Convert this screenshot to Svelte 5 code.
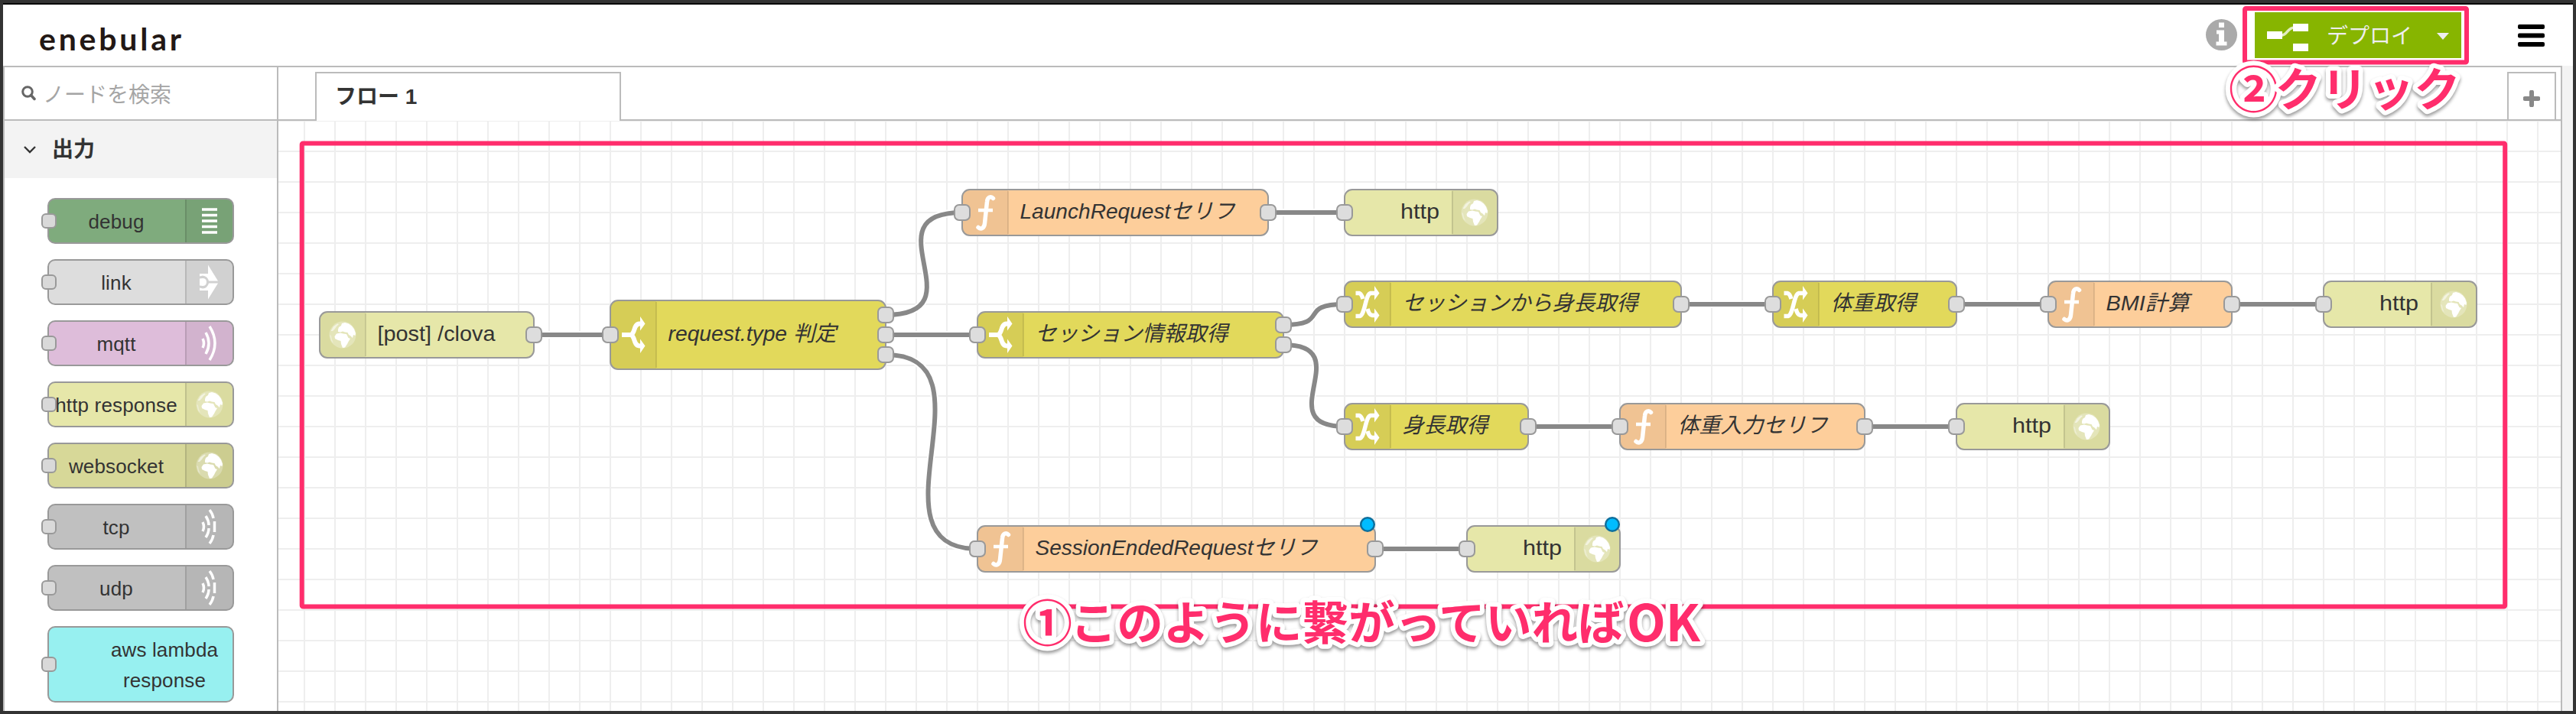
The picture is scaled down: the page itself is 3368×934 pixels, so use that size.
<script>
  const palette = [
    { label: 'debug', color: '#7fab7d', icon: 'debug' },
    { label: 'link', color: '#dddddd', icon: 'link' },
    { label: 'mqtt', color: '#debdda', icon: 'waves' },
    { label: 'http response', color: '#e6e7a9', icon: 'globe' },
    { label: 'websocket', color: '#d7d898', icon: 'globe' },
    { label: 'tcp', color: '#c0c0c0', icon: 'dashes' },
    { label: 'udp', color: '#c0c0c0', icon: 'dashes' },
    { label: 'aws lambda response', color: '#97f0f0', icon: null }
  ];

  const HTTP = '#e6e7a9';
  const RULE = '#e2d95b';
  const FUNC = '#fdce9b';

  // x, cy: left edge and vertical centre; ins/outs: port offsets from the centre
  const nodes = [
    { x: 418, w: 280, cy: 438, c: HTTP, icon: 'globe', t: '[post] /clova', tl: 154, ins: [], outs: [0] },
    { x: 798, w: 360, h: 90, cy: 438, c: RULE, icon: 'split', t: 'request.type 判定', tl: 220, it: true, ins: [0], outs: [-26, 0, 26] },
    { x: 1258, w: 400, cy: 278, c: FUNC, icon: 'func', t: 'LaunchRequestセリフ', tl: 281, it: true, ins: [0], outs: [0] },
    { x: 1758, w: 200, cy: 278, c: HTTP, icon: 'globe', right: true, t: 'http', tl: 51, ins: [0], outs: [] },
    { x: 1278, w: 400, cy: 438, c: RULE, icon: 'split', t: 'セッション情報取得', tl: 252, it: true, ins: [0], outs: [-13, 13] },
    { x: 1758, w: 440, cy: 398, c: RULE, icon: 'shuffle', t: 'セッションから身長取得', tl: 308, it: true, ins: [0], outs: [0] },
    { x: 2318, w: 240, cy: 398, c: RULE, icon: 'shuffle', t: '体重取得', tl: 112, it: true, ins: [0], outs: [0] },
    { x: 2678, w: 240, cy: 398, c: FUNC, icon: 'func', t: 'BMI計算', tl: 109, it: true, ins: [0], outs: [0] },
    { x: 3038, w: 200, cy: 398, c: HTTP, icon: 'globe', right: true, t: 'http', tl: 51, ins: [0], outs: [] },
    { x: 1758, w: 240, cy: 558, c: RULE, icon: 'shuffle', t: '身長取得', tl: 112, it: true, ins: [0], outs: [0] },
    { x: 2118, w: 320, cy: 558, c: FUNC, icon: 'func', t: '体重入力セリフ', tl: 196, it: true, ins: [0], outs: [0] },
    { x: 2558, w: 200, cy: 558, c: HTTP, icon: 'globe', right: true, t: 'http', tl: 51, ins: [0], outs: [] },
    { x: 1278, w: 520, cy: 718, c: FUNC, icon: 'func', t: 'SessionEndedRequestセリフ', tl: 369, it: true, ins: [0], outs: [0], changed: true },
    { x: 1918, w: 200, cy: 718, c: HTTP, icon: 'globe', right: true, t: 'http', tl: 51, ins: [0], outs: [], changed: true }
  ];

  const wires = [
    [698, 438, 798, 438],
    [1158, 412, 1258, 278],
    [1158, 438, 1278, 438],
    [1158, 464, 1278, 718],
    [1658, 278, 1758, 278],
    [1678, 425, 1758, 398],
    [1678, 451, 1758, 558],
    [2198, 398, 2318, 398],
    [2558, 398, 2678, 398],
    [2918, 398, 3038, 398],
    [1998, 558, 2118, 558],
    [2438, 558, 2558, 558],
    [1798, 718, 1918, 718]
  ];

  function curve([x1, y1, x2, y2]) {
    const o = 0.75 * Math.min(200, Math.hypot(x2 - x1, y2 - y1));
    return `M${x1} ${y1}C${x1 + o} ${y1} ${x2 - o} ${y2} ${x2} ${y2}`;
  }
</script>

{#snippet icon(name)}
  {#if name === 'globe'}
    <g fill="#fff">
      <circle r="17.5" opacity="0.28" />
      <path d="M-6-7L-5-10-2-12-1-15 3-16 8-14.500 12-11.500 15-7.500 17-2 16.500 1 14 0 13 4 10.500 1.500 8 0 6.500-3 3-3.500 0-4.500-3-3.500-6-4z" />
      <path d="M-8-1.500L-3-2.500 1-1.500 5-1 7.500 4 10 5 7.500 9 6 12 3 16.500 0 17-2 12-2.500 8-6 7-10 5-10.500 2z" />
      <path d="M-15.500-5L-12-11-7-14.500-5-14-8-11-10-8-13-5z" opacity="0.55" />
      <path d="M-17 0L-15 1-14 6-12 11-15 8z" opacity="0.35" />
    </g>
  {:else if name === 'split'}
    <path d="M-15 0H-3C3-3 0-14 8-14.5H11M-3 0C3 3 0 14 8 14.5H11" fill="none" stroke="#fff" stroke-width="6" />
    <path d="M9-24L15.500-14.500 9-5.500zM9 24L15.500 14.500 9 5.500z" fill="#fff" />
  {:else if name === 'shuffle'}
    <path d="M-15.500 15.500H-10C-3 13-3-13 4-14.500H10" fill="none" stroke="#fff" stroke-width="5.500" />
    <path d="M-15.500-14.500H-11Q-8-14-6-7M0 6Q2 14 6 14.500H10" fill="none" stroke="#fff" stroke-width="5.500" />
    <path d="M9-24L15.500-14.500 9-5.500zM9 24L15.500 14.500 9 5.500z" fill="#fff" />
  {:else if name === 'func'}
    <path d="M10.500-18.500C8-21.500 3-21 2.500-14L-.5 14C-1 20-5 23-9 19.500" fill="none" stroke="#fff" stroke-width="5.500" stroke-linecap="round" />
    <path d="M-9-3H10" stroke="#fff" stroke-width="4.500" />
  {:else if name === 'debug'}
    <path d="M-10-15H10M-10-7.500H10M-10 0H10M-10 7.500H10M-10 15H10" stroke="#fff" stroke-width="3.400" />
  {:else if name === 'link'}
    <path d="M-13-11H-2V-22.500L11-1.500H-1Q-3-8-9-8.500L-13-7.500zM-13 11H-2V22.500L11 1.500H-1Q-3 8-9 8.500L-13 7.500zM-13-4.500Q-4-6.500-4 0-4 6.500-13 4.500z" fill="#fff" />
  {:else if name === 'waves'}
    <path d="M-9-6Q-6 0-9 6M-5-14Q3 0-5 14M0-22Q14 0 0 22" fill="none" stroke="#fff" stroke-width="3.500" />
  {:else if name === 'dashes'}
    <path d="M-9-6Q-6 0-9 6" fill="none" stroke="#fff" stroke-width="3.500" />
    <path d="M-5-14Q-1-8-1-2M-1 2Q-1 8-5 14M0-22Q4-17 5-11M6.500-7V7M5 11Q4 17 0 22" fill="none" stroke="#fff" stroke-width="3.500" />
  {/if}
{/snippet}

<div class="frame">
  <header>
    <svg class="logo" width="200" height="50" viewBox="0 0 200 50">
      <text x="1" y="40.500" textLength="186">enebular</text>
    </svg>
    <div class="actions">
      <svg class="info" width="41" height="41" viewBox="0 0 41 41">
        <circle cx="20.500" cy="20.500" r="20.500" fill="#aaa" />
        <path d="M17 4.500h7v6.500h-7zM14 14.500h10v15h3.500v5h-14v-5H17v-10h-3z" fill="#fff" />
      </svg>
      <button class="deploy">
        <svg width="54" height="36" viewBox="0 0 54 36">
          <path d="M18 15.500C27 15.500 26 5 36 5" fill="none" stroke="#fff" stroke-opacity=".75" stroke-width="3.500" />
          <path d="M0 10h20v10H0zM34 0h20v10H34zM34 26h20v10H34z" fill="#fff" />
        </svg>
        <span>デプロイ</span>
        <svg width="16" height="9" viewBox="0 0 16 9"><path d="M0 0H16L8 9z" fill="#eee" /></svg>
      </button>
      <svg class="menu" width="35" height="30" viewBox="0 0 35 30">
        <rect width="35" height="6" rx="2" /><rect y="11.500" width="35" height="6" rx="2" /><rect y="23" width="35" height="6" rx="2" />
      </svg>
    </div>
  </header>

  <div class="main">
    <aside>
      <div class="search">
        <svg width="19" height="20" viewBox="0 0 19 20">
          <circle cx="8" cy="8" r="6.300" fill="none" stroke="#666" stroke-width="3" />
          <path d="M12.500 12.500L17 17.500" stroke="#666" stroke-width="3.500" stroke-linecap="round" />
        </svg>
        <span>ノードを検索</span>
      </div>
      <div class="category">
        <svg width="16" height="10" viewBox="0 0 16 10"><path d="M1 1L8 8 15 1" fill="none" stroke="#333" stroke-width="2.400" /></svg>
        <span>出力</span>
      </div>
      <div class="items">
        {#each palette as p}
          <div class="item" class:tall={!p.icon} style:background-color={p.color}>
            <i class="port"></i>
            <div class="label">{p.label}</div>
            {#if p.icon}
              <div class="ico">
                <svg width="60" height="56" viewBox="-30 -28 60 56">{@render icon(p.icon)}</svg>
              </div>
            {/if}
          </div>
        {/each}
      </div>
    </aside>

    <section>
      <div class="tabs">
        <div class="tab">フロー 1</div>
        <div class="add">
          <svg width="22" height="22" viewBox="0 0 22 22"><path d="M2.500 11H19.500M11 2.500V19.500" stroke="#888" stroke-width="6" stroke-linecap="round" /></svg>
        </div>
      </div>
      <svg class="canvas" width="2984" height="772" viewBox="364 158 2984 772">
        <defs>
          <pattern id="grid" x="358" y="158" width="40" height="40" patternUnits="userSpaceOnUse">
            <path d="M0 0H40M0 40H40M0 0V40M40 0V40" stroke="#eee" stroke-width="2" />
          </pattern>
        </defs>
        <rect x="364" y="158" width="2984" height="772" fill="url(#grid)" />
        {#each wires as w}
          <path d={curve(w)} fill="none" stroke="#fff" stroke-width="10" />
          <path d={curve(w)} fill="none" stroke="#888" stroke-width="6" />
        {/each}
        {#each nodes as n}
          {@const h = n.h ?? 60}
          {@const top = n.cy - h / 2}
          {@const ix = n.right ? n.x + n.w - 60 : n.x}
          <rect x={n.x} y={top} width={n.w} height={h} rx="10" fill={n.c} />
          {#if n.right}
            <path d="M{ix} {top}h50a10 10 0 0 1 10 10v{h - 20}a10 10 0 0 1 -10 10h-50z" fill-opacity=".05" />
            <path d="M{ix + 1} {top + 2}v{h - 4}" stroke="#000" stroke-opacity=".1" stroke-width="2" />
          {:else}
            <path d="M{ix + 60} {top}h-50a10 10 0 0 0 -10 10v{h - 20}a10 10 0 0 0 10 10h50z" fill-opacity=".05" />
            <path d="M{ix + 60} {top + 2}v{h - 4}" stroke="#000" stroke-opacity=".1" stroke-width="2" />
          {/if}
          <rect x={n.x} y={top} width={n.w} height={h} rx="10" fill="none" stroke="#999" stroke-width="2" />
          <g transform="translate({ix + 30} {n.cy})">{@render icon(n.icon)}</g>
          <text class="nt" class:it={n.it} x={n.right ? n.x + n.w - 76 - n.tl : n.x + 75.5} y={n.cy + 8} textLength={n.tl} lengthAdjust="spacingAndGlyphs">{n.t}</text>
          {#each n.ins as o}
            <rect x={n.x - 10} y={n.cy + o - 10} width="20" height="20" rx="6" fill="#ddd" stroke="#999" stroke-width="2" />
          {/each}
          {#each n.outs as o}
            <rect x={n.x + n.w - 10} y={n.cy + o - 10} width="20" height="20" rx="6" fill="#ddd" stroke="#999" stroke-width="2" />
          {/each}
          {#if n.changed}
            <circle cx={n.x + n.w - 10} cy={top - 2} r="8.800" fill="#00bcff" stroke="#0f6f9c" stroke-width="2.500" />
          {/if}
        {/each}
      </svg>
    </section>
    <div class="gutter"></div>
  </div>

  <svg class="notes" width="3368" height="934" viewBox="0 0 3368 934">
    <rect x="394.700" y="187.500" width="2880.500" height="606" rx="1.500" />
    <rect x="2935" y="11" width="290" height="70.500" rx="1.500" />
    <g class="note">
      <text x="2914" y="140.500" font-size="65">②</text>
      <text x="2974.500" y="139">クリック</text>
      <text x="1337" y="838.500" font-size="65">①</text>
      <text x="1399.600" y="837">このように繋がっていれば</text>
      <text x="2127" y="839" font-size="66">OK</text>
    </g>
  </svg>
</div>

<style>
  :global(body) { margin: 0; }
  .frame {
    position: relative;
    box-sizing: border-box;
    width: 3368px;
    height: 934px;
    border: 4px solid #333;
    display: flex;
    flex-direction: column;
    background: #fff;
    overflow: hidden;
    font-family: "Liberation Sans", "Noto Sans CJK JP", sans-serif;
    color: #333;
  }
  header {
    box-sizing: border-box;
    height: 82px;
    flex: none;
    border-top: 2px solid #000;
    display: flex;
    justify-content: space-between;
    padding: 10px 37px 0 46px;
  }
  .logo { margin-top: 9px; }
  .logo text {
    font: 700 41px Lato, sans-serif;
    fill: #231815;
  }
  .actions { display: flex; align-items: flex-start; }
  .info { margin: 9px 23px 0 0; }
  .deploy {
    box-sizing: border-box;
    width: 270px;
    height: 60px;
    border: 0;
    padding: 0 16px;
    background: #87b500;
    color: #eee;
    display: flex;
    align-items: center;
    font: 28px/40px "Noto Sans CJK JP", sans-serif;
  }
  .deploy svg { margin-top: 6px; flex: none; }
  .deploy svg + span { margin-left: 24px; margin-right: 32px; margin-top: -3px; white-space: nowrap; }
  .deploy span + svg { margin-top: 3px; }
  .menu { margin: 16px 0 0 74px; }
  .main { flex: 1; min-height: 0; display: flex; }
  aside {
    box-sizing: border-box;
    width: 360px;
    flex: none;
    border: 2px solid #bbb;
    border-bottom: 0;
  }
  .search {
    box-sizing: border-box;
    height: 70px;
    border-bottom: 2px solid #bbb;
    display: flex;
    align-items: center;
    padding-left: 22px;
    gap: 9px;
    font: 28px/40px "Noto Sans CJK JP", sans-serif;
    color: #a5a5a5;
  }
  .category {
    height: 75px;
    background: #f3f3f3;
    display: flex;
    align-items: center;
    padding-left: 25px;
    gap: 21px;
    font: 700 28px/40px "Noto Sans CJK JP", sans-serif;
  }
  .category span { margin-top: -6px; }
  .items { padding: 26px 0 0 56px; display: flex; flex-direction: column; gap: 20px; }
  .item {
    position: relative;
    box-sizing: border-box;
    width: 244px;
    height: 60px;
    border: 2px solid #999;
    border-radius: 10px;
    display: flex;
    font-size: 26px;
    line-height: 40px;
    letter-spacing: .15px;
  }
  .tall { height: 100px; }
  .label { flex: 1; text-align: center; padding: 9px 2px 0 0; white-space: nowrap; }
  .tall .label { margin-left: 68px; padding-right: 6px; white-space: normal; }
  .port {
    position: absolute;
    box-sizing: border-box;
    left: -10px;
    top: calc(50% - 10px);
    width: 20px;
    height: 20px;
    border: 2px solid #999;
    border-radius: 6px;
    background: #d9d9d9;
  }
  .ico {
    width: 60px;
    border-left: 2px solid rgba(0, 0, 0, .12);
    background: rgba(0, 0, 0, .05);
    border-radius: 0 8px 8px 0;
  }
  section {
    width: 2984px;
    border-top: 2px solid #bbb;
    border-right: 2px solid #bbb;
    flex: none;
  }
  .tabs {
    box-sizing: border-box;
    height: 70px;
    border-bottom: 2px solid #bbb;
    display: flex;
    align-items: flex-end;
    justify-content: space-between;
    padding: 0 6px 0 48px;
  }
  .tab {
    box-sizing: border-box;
    width: 400px;
    height: 64px;
    margin-bottom: -2px;
    padding: 11px 0 0 24px;
    border: 2px solid #bbb;
    border-bottom: 0;
    background: #fff;
    font: 700 28px/40px "Liberation Sans", "Noto Sans CJK JP", sans-serif;
  }
  .add {
    box-sizing: border-box;
    width: 64px;
    height: 62px;
    border: 2px solid #bbb;
    border-bottom: 0;
    display: grid;
    place-items: center;
    padding-top: 6px;
  }
  .canvas { display: block; }
  .nt { font-size: 28px; fill: #333; }
  .it { font-style: italic; }
  .gutter { flex: 1; background: #f3f3f3; }
  .notes { position: absolute; left: -4px; top: -4px; pointer-events: none; }
  .notes rect { fill: none; stroke: #ff2d6c; stroke-width: 6; }
  .note {
    filter: drop-shadow(0 3px 2px rgba(0, 0, 0, .4));
    font-family: "Noto Sans CJK JP", sans-serif;
    font-weight: 700;
    font-size: 60.600px;
    fill: #ff2d6c;
    stroke: #fff;
    stroke-width: 12px;
    stroke-linejoin: round;
    paint-order: stroke;
  }
</style>
